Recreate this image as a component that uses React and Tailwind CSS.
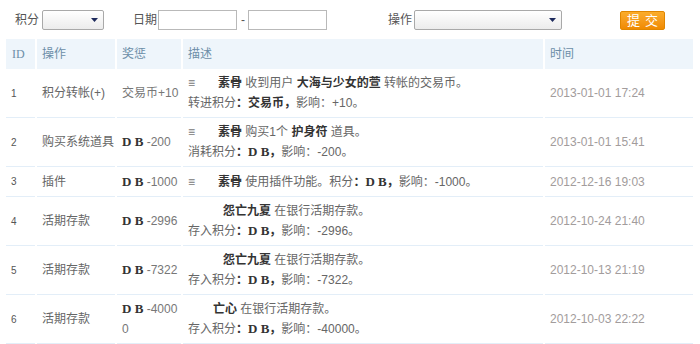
import React from 'react';

const font = { fontFamily: '"Liberation Sans", "Noto Sans CJK SC", sans-serif' };

// bold serif "D B" currency mark
const DB = () => (
  <b className="font-['Liberation_Serif',serif] font-bold text-[13px] text-[#333]">D B</b>
);

const Name = ({ children }) => <b className="font-bold text-[#333]">{children}</b>;

const Arrow = () => (
  <svg width="7" height="4" viewBox="0 0 7 4" className="block">
    <path d="M0 0h7L3.5 4z" fill="#1d2a5c" />
  </svg>
);

const Select = ({ w }) => (
  <div className={`${w} h-[20px] border border-[#a9a9a9] rounded-[2px] bg-gradient-to-b from-white to-[#ececec] flex items-center justify-end pr-[5px]`}>
    <Arrow />
  </div>
);

const rows = [
  {
    id: 1, op: '积分转帐(+)', reward: <>交易币+10</>,
    desc: [
      <><span className="text-[#777] mr-[23px]">≡</span><Name>素骨</Name> 收到用户 <Name>大海与少女的萱</Name> 转帐的交易币。</>,
      <>转进积分<b className="text-[#333]">：</b><Name>交易币</Name><b className="text-[#333]">，</b>影响：+10。</>,
    ],
    time: '2013-01-01 17:24',
  },
  {
    id: 2, op: '购买系统道具', reward: <><DB /> -200</>,
    desc: [
      <><span className="text-[#777] mr-[23px]">≡</span><Name>素骨</Name> 购买1个 <Name>护身符</Name> 道具。</>,
      <>消耗积分<b className="text-[#333]">：</b><DB /><b className="text-[#333]">，</b>影响：-200。</>,
    ],
    time: '2013-01-01 15:41',
  },
  {
    id: 3, op: '插件', reward: <><DB /> -1000</>,
    desc: [
      <><span className="text-[#777] mr-[23px]">≡</span><Name>素骨</Name> 使用插件功能。积分<b className="text-[#333]">：</b><DB /><b className="text-[#333]">，</b>影响：-1000。</>,
    ],
    time: '2012-12-16 19:03',
  },
  {
    id: 4, op: '活期存款', reward: <><DB /> -2996</>,
    desc: [
      <><span className="ml-[35px]" /><Name>怨亡九夏</Name> 在银行活期存款。</>,
      <>存入积分<b className="text-[#333]">：</b><DB /><b className="text-[#333]">，</b>影响：-2996。</>,
    ],
    time: '2012-10-24 21:40',
  },
  {
    id: 5, op: '活期存款', reward: <><DB /> -7322</>,
    desc: [
      <><span className="ml-[35px]" /><Name>怨亡九夏</Name> 在银行活期存款。</>,
      <>存入积分<b className="text-[#333]">：</b><DB /><b className="text-[#333]">，</b>影响：-7322。</>,
    ],
    time: '2012-10-13 21:19',
  },
  {
    id: 6, op: '活期存款', reward: <><DB /> -4000<br />0</>,
    desc: [
      <><span className="ml-[25px]" /><Name>亡心</Name> 在银行活期存款。</>,
      <>存入积分<b className="text-[#333]">：</b><DB /><b className="text-[#333]">，</b>影响：-40000。</>,
    ],
    time: '2012-10-03 22:22',
  },
];

const cols = 'grid grid-cols-[29px_78px_64px_360px_148px] gap-x-[2px]';
const cell = 'border-b border-[#e3eef8] flex items-center pl-[5px] min-h-[30px]';

export default function App() {
  return (
    <div className="w-[700px] h-[344px] overflow-hidden bg-white text-[12px] text-[#666]" style={font}>
      {/* filter bar */}
      <div className="flex items-center pt-[10px] h-[30px] text-[#555]">
        <span className="ml-[15px] w-[24px]">积分</span>
        <div className="ml-[3px]"><Select w="w-[62px]" /></div>
        <span className="ml-[29px] w-[24px]">日期</span>
        <div className="ml-[1px] w-[79px] h-[20px] border border-[#b9b9b9] bg-white" />
        <span className="ml-[4px] w-[4px]">-</span>
        <div className="ml-[3px] w-[79px] h-[20px] border border-[#b9b9b9] bg-white" />
        <span className="ml-[61px] w-[24px]">操作</span>
        <div className="ml-[2px]"><Select w="w-[148px]" /></div>
        <button className="ml-[58px] w-[45px] h-[19px] rounded-[2px] border border-[#e08600] bg-gradient-to-b from-[#fbac2a] to-[#f08a00] text-white text-[13px] leading-[17px] tracking-[5px] pl-[5px]">
          提交
        </button>
      </div>

      {/* table */}
      <div className="ml-[6px] mt-[9px] w-[687px]">
        <div className={`${cols} h-[30px] text-[#6c8ea8]`}>
          <div className="bg-[#eef5fb] flex items-center pl-[6px] font-['Liberation_Serif',serif]">ID</div>
          <div className="bg-[#eef5fb] flex items-center pl-[5px]">操作</div>
          <div className="bg-[#eef5fb] flex items-center pl-[5px]">奖惩</div>
          <div className="bg-[#eef5fb] flex items-center pl-[5px]">描述</div>
          <div className="bg-[#eef5fb] flex items-center pl-[5px]">时间</div>
        </div>
        {rows.map((r) => (
          <div key={r.id} className={cols}>
            <div className={`${cell} text-[10px] text-[#555]`}>{r.id}</div>
            <div className={`${cell} text-[#666]`}>{r.op}</div>
            <div className={`${cell} leading-[20px] text-[#777]`}><div>{r.reward}</div></div>
            <div className={`${cell} leading-[20px] py-[4px] text-[#666]`}>
              <div>
                {r.desc.map((d, i) => (
                  <div key={i}>{d}</div>
                ))}
              </div>
            </div>
            <div className={`${cell} text-[#a29c9c]`}>{r.time}</div>
          </div>
        ))}
      </div>
    </div>
  );
}
